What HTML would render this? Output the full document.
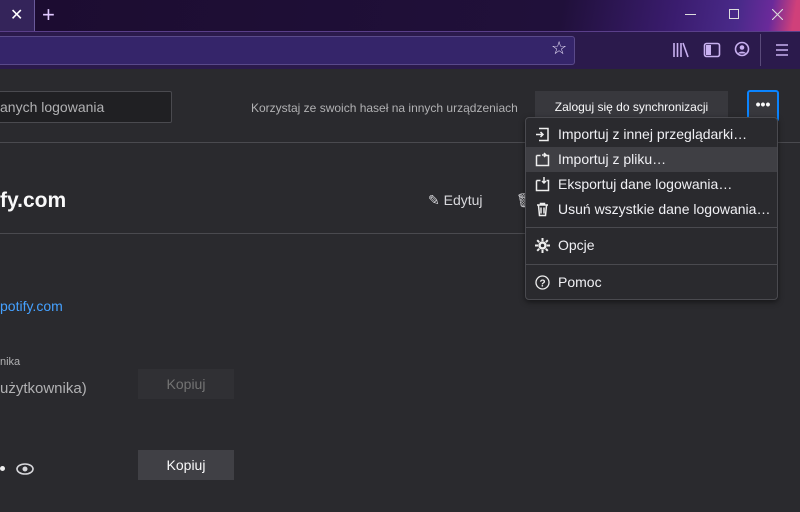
<!DOCTYPE html>
<html><head><meta charset="utf-8"><style>
*{margin:0;padding:0;box-sizing:border-box}
body{width:800px;height:512px;overflow:hidden;background:#2a2a2e;font-family:"Liberation Sans",sans-serif;color:#f9f9fa;position:relative}
.abs{position:absolute}
.tabbar{left:0;top:0;width:800px;height:31px;background:linear-gradient(100deg,#1c0c30 0%,#20103a 70%,#3a1c6e 84%,#4a2a8a 92%,#6a2a9a 96%,#d0407a 99%)}
.toolbar{left:0;top:31px;width:800px;height:38px;background:#2b1a4c;border-top:1px solid #5a3f8a}
.url{left:-4px;top:36px;width:579px;height:29px;background:#35256a;border:1px solid #5a4a8a;border-radius:3px}
.btn{background:#38383d;color:#f9f9fa;font-size:12px;text-align:center}
.menu{left:525px;top:117px;width:253px;height:183px;background:#2a2a2e;border:1px solid #4a4a4f;border-radius:4px;box-shadow:0 2px 6px rgba(0,0,0,.5)}
.mi{position:absolute;left:0;width:251px;height:25px;font-size:14px;color:#f0f0f4;padding-left:32px;line-height:25px}
.mi svg{position:absolute;left:9px;top:5px}
</style></head><body>
<div class="abs tabbar"></div>
<div class="abs" style="left:0;top:0;width:35px;height:31px;background:#34245a;border-right:1px solid #6a5a9a"></div>
<div class="abs" style="left:10px;top:5px;font-size:16px;color:#fff">✕</div>
<div class="abs" style="left:42px;top:2px;font-size:22px;color:#e0c8ff">+</div>
<div class="abs" style="left:685px;top:14px;width:11px;height:1px;background:#ddd"></div>
<div class="abs" style="left:729px;top:9px;width:10px;height:10px;border:1px solid #ddd"></div>
<svg class="abs" style="left:772px;top:9px" width="11" height="11"><path d="M0 0L11 11M11 0L0 11" stroke="#ddd" stroke-width="1.1"/></svg>
<div class="abs toolbar"></div>
<div class="abs url"></div>
<div class="abs" style="left:551px;top:38px;font-size:18px;color:#e8e0f8">☆</div>
<svg class="abs" style="left:672px;top:42px" width="18" height="16"><g stroke="#c8b0f0" stroke-width="1.6" fill="none"><path d="M2 1v14M5.5 1v14M9 1v14M11 1l5 14"/></g></svg>
<svg class="abs" style="left:703px;top:42px" width="18" height="16"><rect x="1.5" y="1.5" width="15" height="13" rx="2" stroke="#c8b0f0" stroke-width="1.6" fill="none"/><rect x="3" y="3" width="5" height="10" fill="#c8b0f0"/></svg>
<svg class="abs" style="left:734px;top:41px" width="16" height="16"><circle cx="8" cy="8" r="6.5" stroke="#c8b0f0" stroke-width="1.6" fill="none"/><circle cx="8" cy="6.5" r="2.3" fill="#c8b0f0"/><path d="M4 12.5c1-2.5 7-2.5 8 0" fill="#c8b0f0"/></svg>
<div class="abs" style="left:760px;top:34px;width:1px;height:32px;background:#5a4a7a"></div>
<svg class="abs" style="left:775px;top:43px" width="14" height="14"><g stroke="#c8b0f0" stroke-width="1.6"><path d="M1 2h12M1 7h12M1 12h12"/></g></svg>

<div class="abs" style="left:-4px;top:91px;width:176px;height:32px;background:#202023;border:1px solid #4a4a4f;border-radius:2px"></div>
<div class="abs" style="left:0;top:99px;font-size:14px;color:#b1b1b3">anych logowania</div>
<div class="abs" style="left:251px;top:101px;font-size:12px;color:#b1b1b3">Korzystaj ze swoich haseł na innych urządzeniach</div>
<div class="abs btn" style="left:535px;top:91px;width:193px;height:32px;line-height:32px">Zaloguj się do synchronizacji</div>
<div class="abs" style="left:747px;top:90px;width:32px;height:32px;border:2px solid #0a84ff;border-radius:3px;background:#38383d;text-align:center;font-size:14px;line-height:24px;font-weight:bold">•••</div>
<div class="abs" style="left:0;top:142px;width:800px;height:1px;background:#4a4a4f"></div>

<div class="abs" style="left:0;top:189px;font-size:21px;font-weight:bold;color:#f9f9fa">fy.com</div>
<div class="abs" style="left:428px;top:192px;font-size:14px;color:#d7d7db">✎ Edytuj</div>
<div class="abs" style="left:516px;top:192px;font-size:14px;color:#d7d7db">🗑</div>
<div class="abs" style="left:0;top:233px;width:525px;height:1px;background:#4a4a4f"></div>
<div class="abs" style="left:0;top:298px;font-size:14px;color:#45a1ff">potify.com</div>
<div class="abs" style="left:0;top:356px;font-size:11px;color:#b1b1b3">nika</div>
<div class="abs" style="left:0;top:380px;font-size:15px;color:#b1b1b3">użytkownika)</div>
<div class="abs btn" style="left:138px;top:369px;width:96px;height:30px;line-height:30px;font-size:14px;background:#303034;color:#737373">Kopiuj</div>
<div class="abs" style="left:0;top:466px;width:5px;height:5px;border-radius:50%;background:#eee"></div>
<svg class="abs" style="left:16px;top:463px" width="18" height="12"><ellipse cx="9" cy="6" rx="8" ry="5" stroke="#d7d7db" stroke-width="1.6" fill="none"/><circle cx="9" cy="6" r="2.5" fill="#d7d7db"/></svg>
<div class="abs btn" style="left:138px;top:450px;width:96px;height:30px;line-height:30px;font-size:14px;background:#404045">Kopiuj</div>

<div class="abs menu">
 <div class="mi" style="top:4px"><svg width="15" height="15"><path d="M4 1.5h9v12H4M1 7.5h7M5.5 5l2.5 2.5L5.5 10" stroke="#eee" stroke-width="1.5" fill="none"/></svg>Importuj z innej przeglądarki…</div>
 <div class="mi" style="top:29px;background:#3f3f44"><svg width="15" height="15"><path d="M1.5 3.5v10h12v-10h-3M1.5 3.5h4M9 1l2 2-2 2M11 3H7" stroke="#eee" stroke-width="1.5" fill="none"/></svg>Importuj z pliku…</div>
 <div class="mi" style="top:54px"><svg width="15" height="15"><path d="M1.5 3.5v10h12v-10h-2M1.5 3.5h4M9 0v6M7 4l2 2 2-2" stroke="#eee" stroke-width="1.5" fill="none"/></svg>Eksportuj dane logowania…</div>
 <div class="mi" style="top:79px"><svg width="15" height="15"><path d="M2 3h11M5.5 3V1.5h4V3M3.5 3.5l1 10h6l1-10M6 5.5v6M9 5.5v6" stroke="#eee" stroke-width="1.5" fill="none"/></svg>Usuń wszystkie dane logowania…</div>
 <div style="position:absolute;left:0;top:109px;width:251px;height:1px;background:#4a4a4f"></div>
 <div class="mi" style="top:115px"><svg width="15" height="15"><circle cx="7.5" cy="7.5" r="3" stroke="#eee" stroke-width="2.5" fill="none"/><g stroke="#eee" stroke-width="2"><path d="M7.5 0v3M7.5 12v3M0 7.5h3M12 7.5h3M2.2 2.2l2 2M10.8 10.8l2 2M2.2 12.8l2-2M10.8 4.2l2-2"/></g></svg>Opcje</div>
 <div style="position:absolute;left:0;top:146px;width:251px;height:1px;background:#4a4a4f"></div>
 <div class="mi" style="top:152px"><svg width="15" height="15"><circle cx="7.5" cy="7.5" r="6.5" stroke="#eee" stroke-width="1.3" fill="none"/><text x="7.5" y="11.5" font-size="10" font-family="Liberation Sans" fill="#eee" text-anchor="middle" font-weight="bold">?</text></svg>Pomoc</div>
</div>
</body></html>
